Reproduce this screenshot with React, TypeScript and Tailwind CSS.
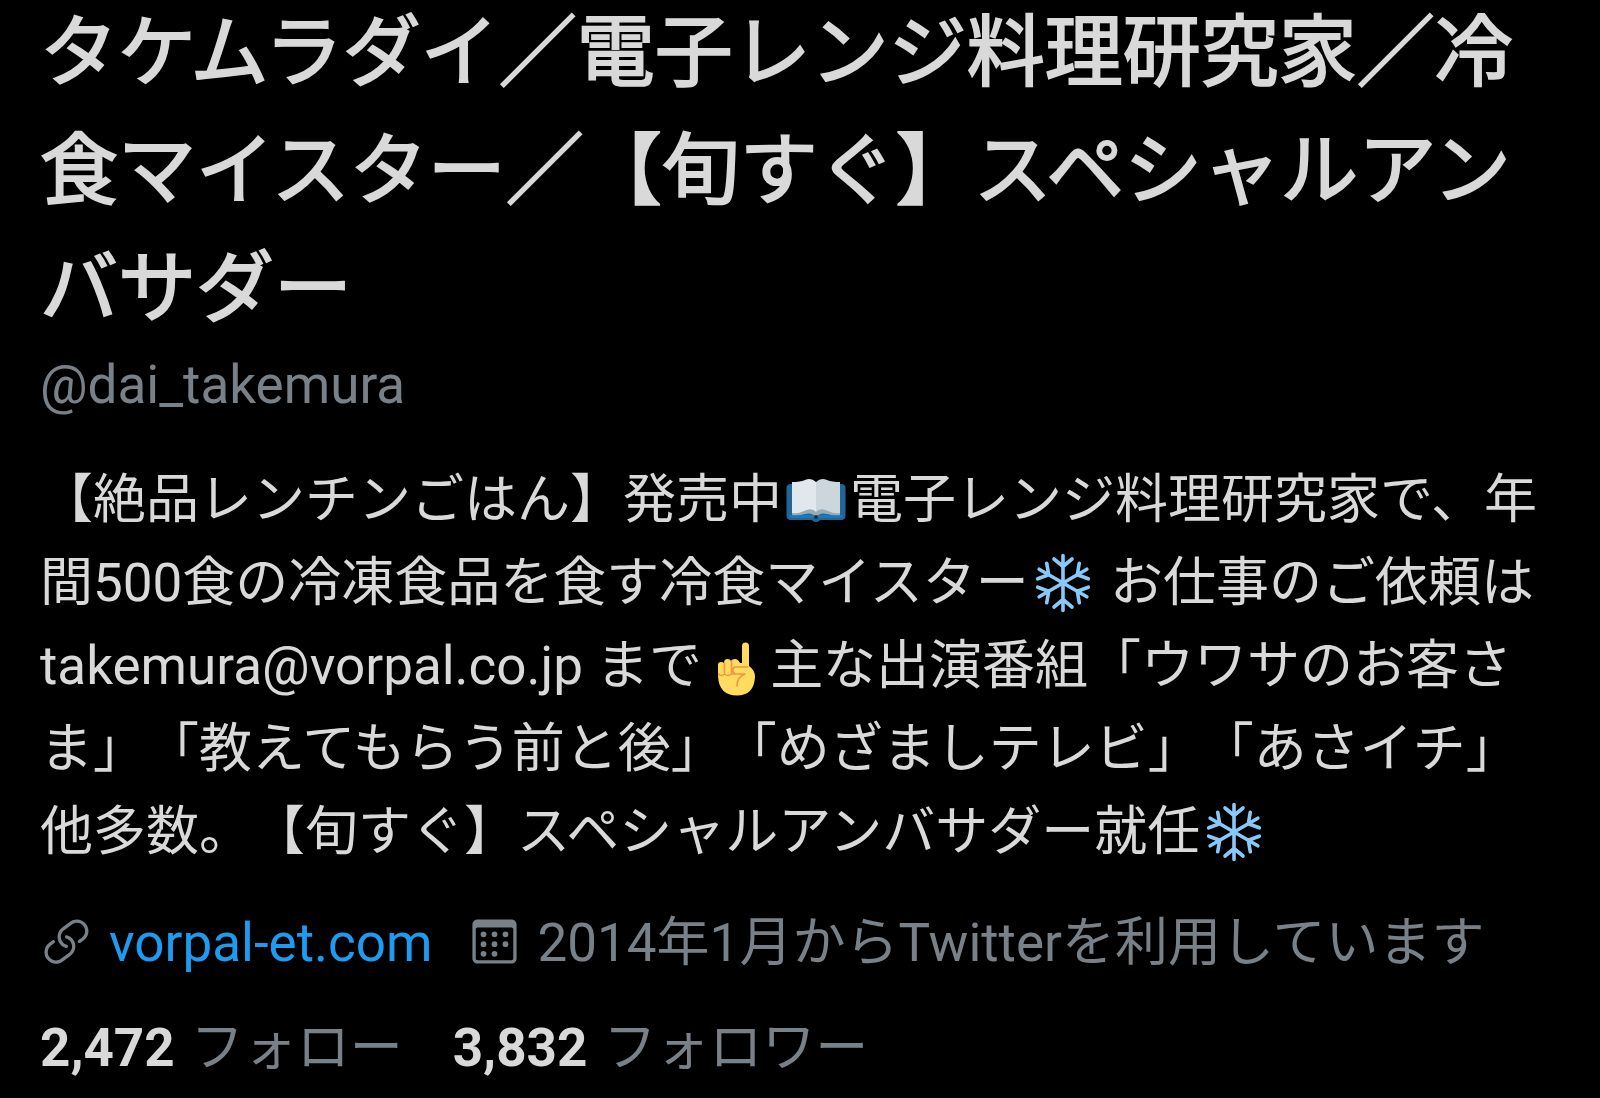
import type { ReactNode } from 'react';

const profile = {
  name: 'タケムラダイ／電子レンジ料理研究家／冷食マイスター／【旬すぐ】スペシャルアンバサダー',
  handle: '@dai_takemura',
  website: 'vorpal-et.com',
  joined: '2014年1月からTwitterを利用しています',
};

const stats = [
  { count: '2,472', label: 'フォロー' },
  { count: '3,832', label: 'フォロワー' },
];

export default function App() {
  return (
    <main className="min-h-screen bg-black px-10 pb-5 font-['Roboto','Noto_Sans_CJK_JP',sans-serif] text-[53px] leading-[83px] text-[#d9d9d9] [text-spacing-trim:space-all]">
      <h1 className="-mt-[5px] text-[78px] leading-[118px] font-normal [-webkit-text-stroke:2px_currentColor]">
        {profile.name}
      </h1>
      <p className="-mt-[5px] text-[#788088]">{profile.handle}</p>

      <p className="mt-8">
        【絶品レンチンごはん】発売中
        <BookEmoji />
        電子レンジ料理研究家で、年間500食の冷凍食品を食す冷食マイスター
        <SnowflakeEmoji /> お仕事のご依頼は takemura@vorpal.co.jp まで
        <PointingEmoji />
        主な出演番組「ウワサのお客さま」「教えてもらう前と後」「めざましテレビ」「あさイチ」他多数。【旬すぐ】スペシャルアンバサダー就任
        <SnowflakeEmoji />
      </p>

      <div className="mt-7 flex items-center gap-9 text-[#788088]">
        <div className="flex items-center gap-4">
          <LinkIcon />
          <a href="https://vorpal-et.com" className="text-[#1d9bf0]">
            {profile.website}
          </a>
        </div>
        <div className="flex items-center gap-4">
          <CalendarIcon />
          <span>{profile.joined}</span>
        </div>
      </div>

      <div className="mt-[22px] flex gap-[50px]">
        {stats.map((stat) => (
          <a key={stat.label} href="#" className="flex gap-4">
            <span className="font-bold">{stat.count}</span>
            <span className="text-[#788088]">{stat.label}</span>
          </a>
        ))}
      </div>
    </main>
  );
}

function Emoji({ label, children }: { label: string; children: ReactNode }) {
  return (
    <svg
      role="img"
      aria-label={label}
      viewBox="0 0 60 60"
      className="mx-1 inline-block size-[60px] align-[-12px]"
    >
      {children}
    </svg>
  );
}

function BookEmoji() {
  return (
    <Emoji label="本">
      <path
        d="M5 14Q.5 14 .5 18V46Q.5 50 5 50H26Q27 52 30 52Q33 52 34 50H55Q59.5 50 59.5 46V18Q59.5 14 55 14Z"
        fill="#226699"
      />
      <path d="M3 46Q4 48 8 48H52Q56 48 57 46V45H3Z" fill="#1c78b8" />
      <path d="M30 12Q25 7 19 10Q14 12 6 12V44Q13 45 20 43Q26 41 30 46Z" fill="#e1e8ed" />
      <path d="M30 12Q35 7 41 10Q46 12 54 12V44Q47 45 40 43Q34 41 30 46Z" fill="#ccd6dd" />
      <path
        d="M6 43Q12 44 18 41Q26 37 30 42Q34 37 42 41Q48 44 54 43V45Q48 46 41 44Q34 42 30 47Q26 42 19 44Q12 46 6 45Z"
        fill="#99aab5"
      />
      <circle cx="30" cy="47" r="2" fill="#292f33" />
    </Emoji>
  );
}

function SnowflakeEmoji() {
  return (
    <Emoji label="雪の結晶">
      <g fill="none" stroke="#88c9f9" strokeWidth="3.6" strokeLinecap="round" strokeLinejoin="round">
        {[0, 60, 120, 180, 240, 300].map((angle) => (
          <path key={angle} d="M30 30V2.5M21 6L30 13.5L39 6" transform={`rotate(${angle} 30 30)`} />
        ))}
      </g>
      <circle cx="30" cy="30" r="3.5" fill="#88c9f9" />
    </Emoji>
  );
}

function PointingEmoji() {
  return (
    <Emoji label="上を指す手">
      <path
        d="M36 10Q36 6.5 39.5 6.5Q43 6.5 43 10V30Q49 34 49 41Q48 59.5 31 59.5Q13 59.5 12 40V29Q12 26 15 26Q17 26 18 27Q18 23 21.5 23Q24 23 25 25Q26 23 29 23Q32 23 34 27H36Z"
        fill="#ffdc5d"
      />
      <path
        d="M18.5 27V37M25.5 25V37M12.5 38Q15 41 18.5 38Q22 41 25.5 38L29 38Q25 35 28 31H42M29 38H39Q31 41 31 50"
        fill="none"
        stroke="#ef9645"
        strokeWidth="1.6"
        strokeLinecap="round"
        strokeLinejoin="round"
      />
    </Emoji>
  );
}

function LinkIcon() {
  return (
    <svg viewBox="0 0 24 24" fill="currentColor" className="mb-1 size-[53px]" aria-hidden="true">
      <path d="M11.96 14.945c-.067 0-.136-.01-.203-.027-1.13-.318-2.097-.986-2.795-1.932-.832-1.125-1.176-2.508-.968-3.893s.942-2.605 2.068-3.438l3.53-2.608c2.322-1.716 5.61-1.224 7.33 1.1.83 1.127 1.175 2.51.967 3.895s-.943 2.605-2.07 3.438l-1.48 1.094c-.333.246-.804.175-1.05-.158-.246-.334-.176-.804.158-1.05l1.48-1.095c.803-.592 1.327-1.463 1.476-2.45.148-.988-.098-1.975-.69-2.778-1.225-1.656-3.572-2.01-5.23-.784l-3.53 2.608c-.802.593-1.326 1.464-1.475 2.45-.15.99.097 1.975.69 2.778.498.675 1.187 1.15 1.992 1.377.4.114.633.528.52.928-.092.33-.394.547-.722.547z" />
      <path d="M7.27 22.054c-1.61 0-3.197-.735-4.225-2.125-.832-1.127-1.176-2.51-.968-3.894s.943-2.605 2.07-3.438l1.478-1.094c.334-.245.805-.175 1.05.158s.177.804-.157 1.05l-1.48 1.095c-.803.593-1.326 1.464-1.475 2.45-.148.99.097 1.975.69 2.778 1.225 1.657 3.57 2.01 5.23.785l3.528-2.608c1.658-1.225 2.01-3.57.785-5.23-.498-.674-1.187-1.15-1.992-1.376-.4-.113-.633-.527-.52-.927.112-.4.528-.63.926-.522 1.13.318 2.096.986 2.794 1.932 1.717 2.324 1.224 5.612-1.1 7.33l-3.53 2.608c-.933.693-2.023 1.026-3.105 1.026z" />
    </svg>
  );
}

function CalendarIcon() {
  const dots = [
    [7.03, 8.75],
    [12, 8.75],
    [16.97, 8.75],
    [7.03, 13.2],
    [12, 13.2],
    [16.97, 13.2],
    [7.03, 17.6],
    [12, 17.6],
  ];

  return (
    <svg viewBox="0 0 24 24" fill="currentColor" className="mb-1 size-[53px]" aria-hidden="true">
      <path d="M19.708 2H4.292C3.028 2 2 3.028 2 4.292v15.416C2 20.972 3.028 22 4.292 22h15.416C20.972 22 22 20.972 22 19.708V4.292C22 3.028 20.972 2 19.708 2zm.792 17.708c0 .437-.355.792-.792.792H4.292c-.437 0-.792-.355-.792-.792V6.418c0-.437.354-.79.79-.792h15.42c.436 0 .79.355.79.79V19.708z" />
      {dots.map(([cx, cy]) => (
        <circle key={`${cx}-${cy}`} cx={cx} cy={cy} r="1.3" />
      ))}
    </svg>
  );
}
